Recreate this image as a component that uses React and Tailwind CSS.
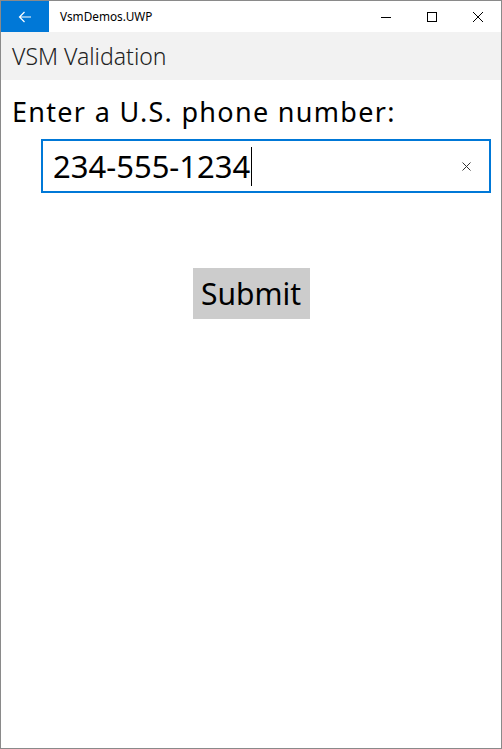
import React from "react";

export default function App() {
  const font = { fontFamily: '"Noto Sans", sans-serif' };
  return (
    <div className="w-[502px] h-[749px] border border-[#8a8a8a] bg-white flex flex-col overflow-hidden" style={font}>
      {/* title bar */}
      <div className="h-[31px] flex items-center shrink-0">
        <div className="w-[48px] h-full bg-[#0078d7] flex items-center justify-center">
          <svg width="14" height="12" viewBox="0 0 14 12" fill="none" stroke="white" strokeWidth="1.2">
            <path d="M13 6H1.5M6.5 1L1.5 6l5 5" />
          </svg>
        </div>
        <div className="ml-[11px] text-[11.8px] text-black leading-none">VsmDemos.UWP</div>
        <div className="ml-auto flex h-full">
          <div className="w-[46px] h-full flex items-center justify-center">
            <svg width="10" height="10" viewBox="0 0 10 10"><path d="M0 5.5H10" stroke="black" strokeWidth="1" /></svg>
          </div>
          <div className="w-[46px] h-full flex items-center justify-center">
            <svg width="10" height="10" viewBox="0 0 10 10"><rect x="0.5" y="0.5" width="9" height="9" fill="none" stroke="black" strokeWidth="1" /></svg>
          </div>
          <div className="w-[46px] h-full flex items-center justify-center">
            <svg width="10" height="10" viewBox="0 0 10 10"><path d="M0 0L10 10M10 0L0 10" stroke="black" strokeWidth="1" /></svg>
          </div>
        </div>
      </div>
      {/* header */}
      <div className="h-[48px] bg-[#f2f2f2] flex items-center pl-[11px] shrink-0">
        <span className="text-[23px] text-[#222] font-light leading-none">VSM Validation</span>
      </div>
      {/* content */}
      <div className="flex flex-col">
        <div className="pl-[11px] pt-[14px] text-[27px] tracking-[1.3px] leading-[36px] text-black">Enter a U.S. phone number:</div>
        <div className="ml-[40px] mt-[9px] w-[450px] h-[54px] border-2 border-[#0078d7] flex items-center pl-[10px] pr-[18px]">
          <span className="text-[31px] leading-none text-black">234-555-1234</span>
          <span className="w-[1px] h-[39px] bg-black ml-[1px]" />
          <svg className="ml-auto" width="9" height="9" viewBox="0 0 9 9"><path d="M0.5 0.5L8.5 8.5M8.5 0.5L0.5 8.5" stroke="#333" strokeWidth="1" /></svg>
        </div>
        <div className="flex justify-center mt-[75px]">
          <div className="w-[117px] h-[51px] bg-[#cccccc] flex items-center justify-center text-[30px] text-black leading-none">Submit</div>
        </div>
      </div>
    </div>
  );
}
